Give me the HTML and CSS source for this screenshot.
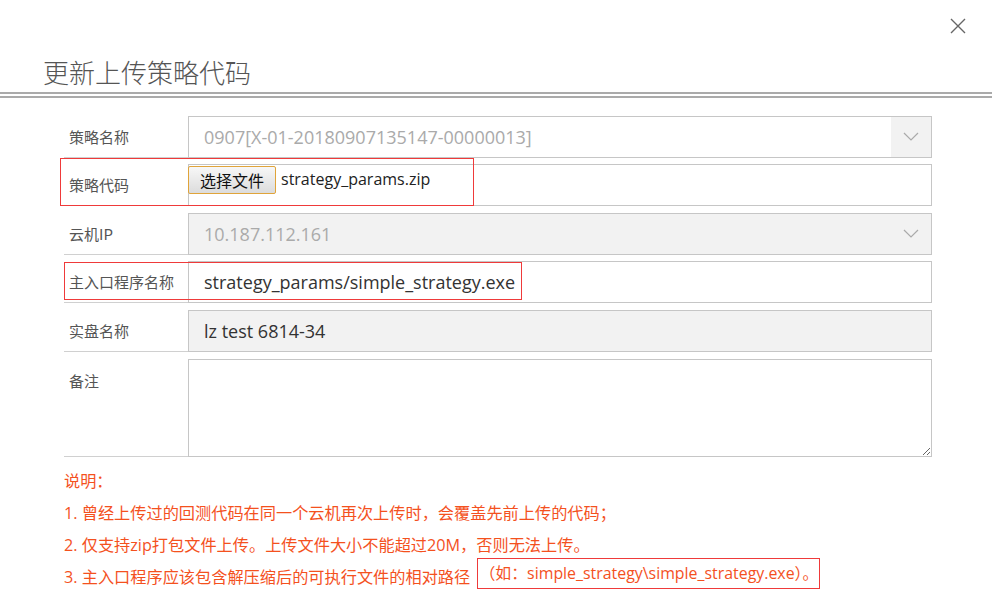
FILE: index.html
```html
<!DOCTYPE html>
<html lang="zh-CN">
<head>
<meta charset="utf-8">
<title>更新上传策略代码</title>
<link rel="stylesheet" href="styles.css">
</head>
<body>
<div class="dialog">
  <button class="close" aria-label="关闭">
    <svg width="18" height="18" viewBox="0 0 18 18"><path d="M2 2 L16 16 M16 2 L2 16" stroke="#666" stroke-width="1.4" fill="none"/></svg>
  </button>
  <h1 class="title">更新上传策略代码</h1>
  <div class="rule"></div>

  <div class="form">
    <div class="row">
      <div class="label">策略名称</div>
      <div class="field select">
        <span class="value muted">0907[X-01-20180907135147-00000013]</span>
        <span class="arrow"><svg width="16" height="9" viewBox="0 0 16 9"><path d="M1 1 L8 8 L15 1" stroke="#aaa" stroke-width="1.2" fill="none"/></svg></span>
      </div>
    </div>
    <div class="row">
      <div class="label">策略代码</div>
      <div class="field file">
        <span class="file-btn">选择文件</span>
        <span class="file-name">strategy_params.zip</span>
      </div>
    </div>
    <div class="row">
      <div class="label">云机IP</div>
      <div class="field select disabled">
        <span class="value muted">10.187.112.161</span>
        <span class="arrow"><svg width="16" height="9" viewBox="0 0 16 9"><path d="M1 1 L8 8 L15 1" stroke="#aaa" stroke-width="1.2" fill="none"/></svg></span>
      </div>
    </div>
    <div class="row">
      <div class="label">主入口程序名称</div>
      <div class="field">
        <span class="value dark">strategy_params/simple_strategy.exe</span>
      </div>
    </div>
    <div class="row">
      <div class="label">实盘名称</div>
      <div class="field disabled">
        <span class="value dark">lz test 6814-34</span>
      </div>
    </div>
    <div class="row row-tall">
      <div class="label label-top">备注</div>
      <textarea class="field area"></textarea>
    </div>
    <div class="mark mark-code"></div>
    <div class="mark mark-entry"></div>
  </div>

  <div class="notes">
    <p>说明：</p>
    <p>1. 曾经上传过的回测代码在同一个云机再次上传时，会覆盖先前上传的代码；</p>
    <p>2. 仅支持zip打包文件上传。上传文件大小不能超过20M，否则无法上传。</p>
    <p>3. 主入口程序应该包含解压缩后的可执行文件的相对路径 <span class="boxed">（如：simple_strategy\simple_strategy.exe）。</span></p>
  </div>
</div>
</body>
</html>
```

FILE: styles.css
```css
* { box-sizing: border-box; }
html, body {
  margin: 0;
  padding: 0;
  background: #fff;
  width: 992px;
  height: 592px;
  overflow: hidden;
}
body {
  font-family: "Noto Sans", "Noto Sans CJK SC", sans-serif;
  color: #333;
}
.dialog {
  position: relative;
  width: 992px;
  height: 592px;
}
.close {
  position: absolute;
  top: 17px;
  left: 949px;
  width: 18px;
  height: 18px;
  padding: 0;
  border: 0;
  background: none;
  display: block;
}
.close svg { display: block; }
.title {
  margin: 0;
  padding: 53px 0 0 43px;
  height: 92px;
  font-family: "Noto Sans CJK SC", sans-serif;
  font-weight: 300;
  font-size: 26px;
  line-height: 38px;
  color: #555;
}
.rule {
  height: 6px;
  border-top: 2px solid #aaa;
  border-bottom: 2px solid #aaa;
}
.form {
  position: relative;
  margin: 11px 60px 0 64px;
}
.row {
  display: flex;
  height: 48.6px;
}
.label {
  width: 124px;
  flex: none;
  border-bottom: 1px solid #d0d0d0;
  padding: 6.6px 0 0 5px;
  display: flex;
  align-items: center;
  font-family: "Noto Sans CJK SC", sans-serif;
  font-size: 15px;
  color: #555;
}
.row-tall { height: 104.6px; }
.label-top { align-items: flex-start; padding-top: 18px; }
.field {
  flex: 1;
  margin-top: 6.6px;
  height: 42px;
  border: 1px solid #c6c6c6;
  background: #fff;
  display: flex;
  align-items: center;
  padding-left: 15px;
  font-family: "Open Sans", "Noto Sans CJK SC", sans-serif;
  font-size: 18px;
}
.disabled { background: #f2f2f2; }
.select { padding-right: 0; }
.select .value { flex: 1; }
.arrow {
  width: 40px;
  height: 40px;
  background: #f2f2f2;
  display: flex;
  align-items: center;
  justify-content: center;
}
.muted { color: #aaa; }
.dark { color: #333; }
.file { padding-left: 0; align-items: flex-start; padding-top: 1px; }
.file-btn {
  display: inline-block;
  height: 28px;
  width: 88px;
  margin-left: -1px;
  text-align: center;
  border: 1px solid #e0a43a;
  border-radius: 2px;
  background: linear-gradient(#f7f7f7, #dcdcdc);
  font-family: "Noto Sans CJK SC", sans-serif;
  font-size: 16px;
  line-height: 26px;
  color: #111;
}
.file-name {
  margin-left: 5px;
  font-family: "Open Sans", sans-serif;
  font-size: 16px;
  line-height: 26px;
  color: #222;
}
.area {
  height: 98px;
  resize: vertical;
  outline: none;
  font: inherit;
}
.mark {
  position: absolute;
  border: 1px solid #ef3a3a;
  pointer-events: none;
}
.mark-code { left: -4px; top: 49px; width: 414px; height: 48px; }
.mark-entry { left: 0; top: 153px; width: 458px; height: 38px; }
.notes {
  margin: 8.4px 0 0 64px;
  font-family: "Open Sans", "Noto Sans CJK SC", sans-serif;
  font-size: 16.2px;
  color: #f4511e;
}
.notes p {
  margin: 0;
  line-height: 32px;
  height: 32px;
  white-space: nowrap;
}
.boxed {
  display: inline-block;
  vertical-align: top;
  margin: -3px 0 0 3px;
  border: 1px solid #ef3a3a;
  font-size: 15.9px;
  line-height: 29px;
  height: 31px;
  padding: 0 1px;
}
```
